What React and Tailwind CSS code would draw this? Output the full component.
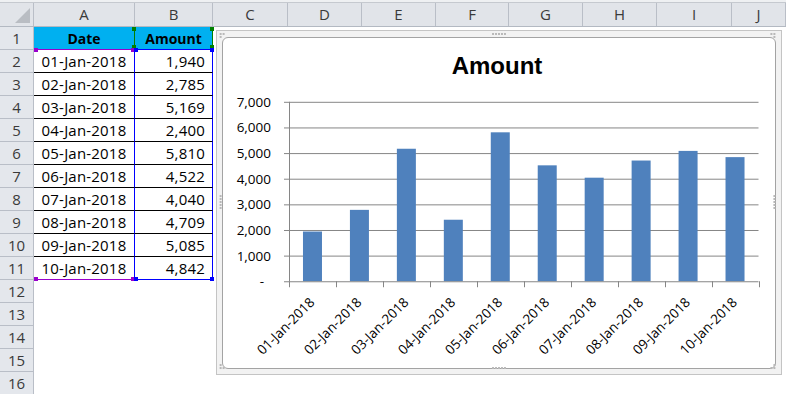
import React from "react";

const cols = [
  { l: "A", c: "w-[101px]" },
  { l: "B", c: "w-[78px]" },
  { l: "C", c: "w-[75px]" },
  { l: "D", c: "w-[74px]" },
  { l: "E", c: "w-[74px]" },
  { l: "F", c: "w-[73px]" },
  { l: "G", c: "w-[74px]" },
  { l: "H", c: "w-[74px]" },
  { l: "I", c: "w-[75px]" },
  { l: "J", c: "flex-1" },
];

const data = [
  ["01-Jan-2018", 1940],
  ["02-Jan-2018", 2785],
  ["03-Jan-2018", 5169],
  ["04-Jan-2018", 2400],
  ["05-Jan-2018", 5810],
  ["06-Jan-2018", 4522],
  ["07-Jan-2018", 4040],
  ["08-Jan-2018", 4709],
  ["09-Jan-2018", 5085],
  ["10-Jan-2018", 4842],
];

const fmt = (n) => n.toLocaleString("en-US");

function RowHeader({ n }) {
  return (
    <div className="w-[34px] h-full shrink-0 bg-[#e4e7ec] border-r border-b border-[#b9bec7] flex items-center justify-center text-[15px] text-[#3a3a3a]">
      {n}
    </div>
  );
}

function DataRow({ r }) {
  if (r === 1) {
    return (
      <>
        <div className="w-[101px] h-full shrink-0 bg-[#00b0f0] border-b border-r border-b-[#9900cc] border-r-[#008000] flex items-center justify-center text-[14px] font-bold text-black">
          Date
        </div>
        <div className="w-[78px] h-full shrink-0 bg-[#00b0f0] border-b border-r border-b-[#0000ff] border-r-[#008000] flex items-center justify-center text-[14px] font-bold text-black">
          Amount
        </div>
      </>
    );
  }
  if (r >= 2 && r <= 11) {
    const [d, v] = data[r - 2];
    const last = r === 11;
    return (
      <>
        <div
          className={
            last
              ? "w-[101px] h-full shrink-0 border-b border-r border-b-[#9900cc] border-r-[#0000ff] flex items-center justify-center text-[15px] tracking-[0.2px] text-black"
              : "w-[101px] h-full shrink-0 border-b border-r border-b-black border-r-[#0000ff] flex items-center justify-center text-[15px] tracking-[0.2px] text-black"
          }
        >
          {d}
        </div>
        <div
          className={
            last
              ? "w-[78px] h-full shrink-0 border-b border-r border-b-[#0000ff] border-r-[#0000ff] flex items-center justify-end pr-[7px] text-[15px] tracking-[0.2px] text-black"
              : "w-[78px] h-full shrink-0 border-b border-r border-b-black border-r-[#0000ff] flex items-center justify-end pr-[7px] text-[15px] tracking-[0.2px] text-black"
          }
        >
          {fmt(v)}
        </div>
      </>
    );
  }
  return (
    <>
      <div className="w-[101px] h-full shrink-0" />
      <div className="w-[78px] h-full shrink-0" />
    </>
  );
}

function Chart() {
  const x0 = 289;
  const x1 = 758.5;
  const yBase = 281;
  const scale = 180 / 7000;
  const cw = (x1 - x0) / 10;
  const ticks = [0, 1000, 2000, 3000, 4000, 5000, 6000, 7000];
  return (
    <div className="absolute left-[216px] top-[30px] w-[566px] h-[345px] border border-[#c4c4c4] bg-[#f2f2f2] pt-[6px] px-[5px] pb-[5px] flex">
      <div className="flex-1 bg-white border border-[#a3a3a3] rounded-[6px] overflow-hidden">
        <svg className="block w-full h-full" viewBox="223 37 552 331" preserveAspectRatio="none">
          <text
            x="497"
            y="73"
            textAnchor="middle"
            fontFamily="'Liberation Sans', Arial, sans-serif"
            fontWeight="bold"
            fontSize="24"
            fill="#000"
          >
            Amount
          </text>
          {ticks.slice(1).map((t) => {
            const y = yBase - t * scale;
            return (
              <line key={t} x1="284" x2={x1} y1={y + 0.5} y2={y + 0.5} stroke="#868686" strokeWidth="1" />
            );
          })}
          {data.map(([d, v], i) => {
            const cx = x0 + cw * (i + 0.5);
            const h = v * scale;
            return <rect key={d} x={cx - 9.5} y={yBase - h} width="19" height={h} fill="#4f81bd" />;
          })}
          <line x1={x0 + 0.5} x2={x0 + 0.5} y1="101" y2={yBase} stroke="#868686" strokeWidth="1" />
          <line x1="284" x2={x1} y1={yBase + 0.5} y2={yBase + 0.5} stroke="#868686" strokeWidth="1" />
          {Array.from({ length: 11 }).map((_, i) => {
            const x = Math.round(x0 + cw * i) + 0.5;
            return <line key={i} x1={x} x2={x} y1={yBase} y2={yBase + 6} stroke="#868686" strokeWidth="1" />;
          })}
          {ticks.map((t) => {
            const y = yBase - t * scale;
            return t === 0 ? (
              <text key={t} x="262" y={y + 5} textAnchor="middle" fontFamily="'Open Sans', sans-serif" fontSize="13.5" fill="#000">
                -
              </text>
            ) : (
              <text key={t} x="271" y={y + 5} textAnchor="end" fontFamily="'Open Sans', sans-serif" fontSize="13.5" fill="#000">
                {fmt(t)}
              </text>
            );
          })}
          {data.map(([d], i) => {
            const cx = x0 + cw * (i + 0.5) + 3;
            const y = 303;
            return (
              <text
                key={d}
                x={cx}
                y={y}
                textAnchor="end"
                transform={`rotate(-45 ${cx} ${y})`}
                fontFamily="'Open Sans', sans-serif"
                fontSize="13.5"
                fill="#000"
              >
                {d}
              </text>
            );
          })}
        </svg>
      </div>
      <svg className="absolute inset-0 w-full h-full pointer-events-none" viewBox="0 0 566 345">
        {[
          [2, 2], [5, 2], [2, 5],
          [556, 2], [559, 2], [559, 5],
          [276, 2], [279, 2], [282, 2], [285, 2], [288, 2],
          [2, 338], [5, 338], [2, 335],
          [559, 338], [556, 338], [559, 335],
          [276, 338], [279, 338], [282, 338], [285, 338], [288, 338],
          [2, 165], [2, 168], [2, 171], [2, 174], [2, 177],
          [559, 165], [559, 168], [559, 171], [559, 174], [559, 177],
        ].map(([x, y], i) => (
          <rect key={i} x={x} y={y} width="2" height="2" fill="#b8b8b8" />
        ))}
      </svg>
    </div>
  );
}

function Handle({ c }) {
  return <div className={c} />;
}

export default function App() {
  const rows = Array.from({ length: 16 }, (_, i) => i + 1);
  return (
    <div className="relative w-[786px] h-[394px] overflow-hidden bg-white font-['Open_Sans',sans-serif]">
      <div className="h-[3px] bg-[#eef0f2] border-b border-[#c5c9cf]" />
      <div className="flex h-[24px] bg-[#e1e4e9] border-b border-[#b3b9c2]">
        <div className="w-[34px] h-full shrink-0 border-r border-[#b9bec7] relative">
          <svg className="absolute left-0 top-0" width="34" height="23" viewBox="0 0 34 23">
            <polygon points="15,20 30,20 30,5" fill="#b9bdc3" />
          </svg>
        </div>
        {cols.map((c) => (
          <div
            key={c.l}
            className={`${c.c} h-full shrink-0 border-r border-[#b9bec7] flex items-center justify-center text-[15px] text-[#3a3a3a]`}
          >
            {c.l}
          </div>
        ))}
      </div>
      {rows.map((r) => (
        <div key={r} className="flex h-[23px]">
          <RowHeader n={r} />
          <DataRow r={r} />
          <div className="flex-1 h-full" />
        </div>
      ))}
      <Chart />
      <Handle c="absolute left-[132px] top-[27px] w-[4px] h-[4px] bg-[#008000]" />
      <Handle c="absolute left-[210px] top-[27px] w-[4px] h-[4px] bg-[#008000]" />
      <Handle c="absolute left-[132px] top-[45px] w-[4px] h-[4px] bg-[#008000]" />
      <Handle c="absolute left-[210px] top-[45px] w-[4px] h-[4px] bg-[#008000]" />
      <Handle c="absolute left-[34px] top-[48px] w-[4px] h-[4px] bg-[#9900cc]" />
      <Handle c="absolute left-[131px] top-[48px] w-[4px] h-[4px] bg-[#9900cc]" />
      <Handle c="absolute left-[34px] top-[277px] w-[4px] h-[4px] bg-[#9900cc]" />
      <Handle c="absolute left-[131px] top-[277px] w-[4px] h-[4px] bg-[#9900cc]" />
      <Handle c="absolute left-[134px] top-[48px] w-[4px] h-[4px] bg-[#0000ff]" />
      <Handle c="absolute left-[210px] top-[48px] w-[4px] h-[4px] bg-[#0000ff]" />
      <Handle c="absolute left-[134px] top-[277px] w-[4px] h-[4px] bg-[#0000ff]" />
      <Handle c="absolute left-[210px] top-[277px] w-[4px] h-[4px] bg-[#0000ff]" />
    </div>
  );
}
